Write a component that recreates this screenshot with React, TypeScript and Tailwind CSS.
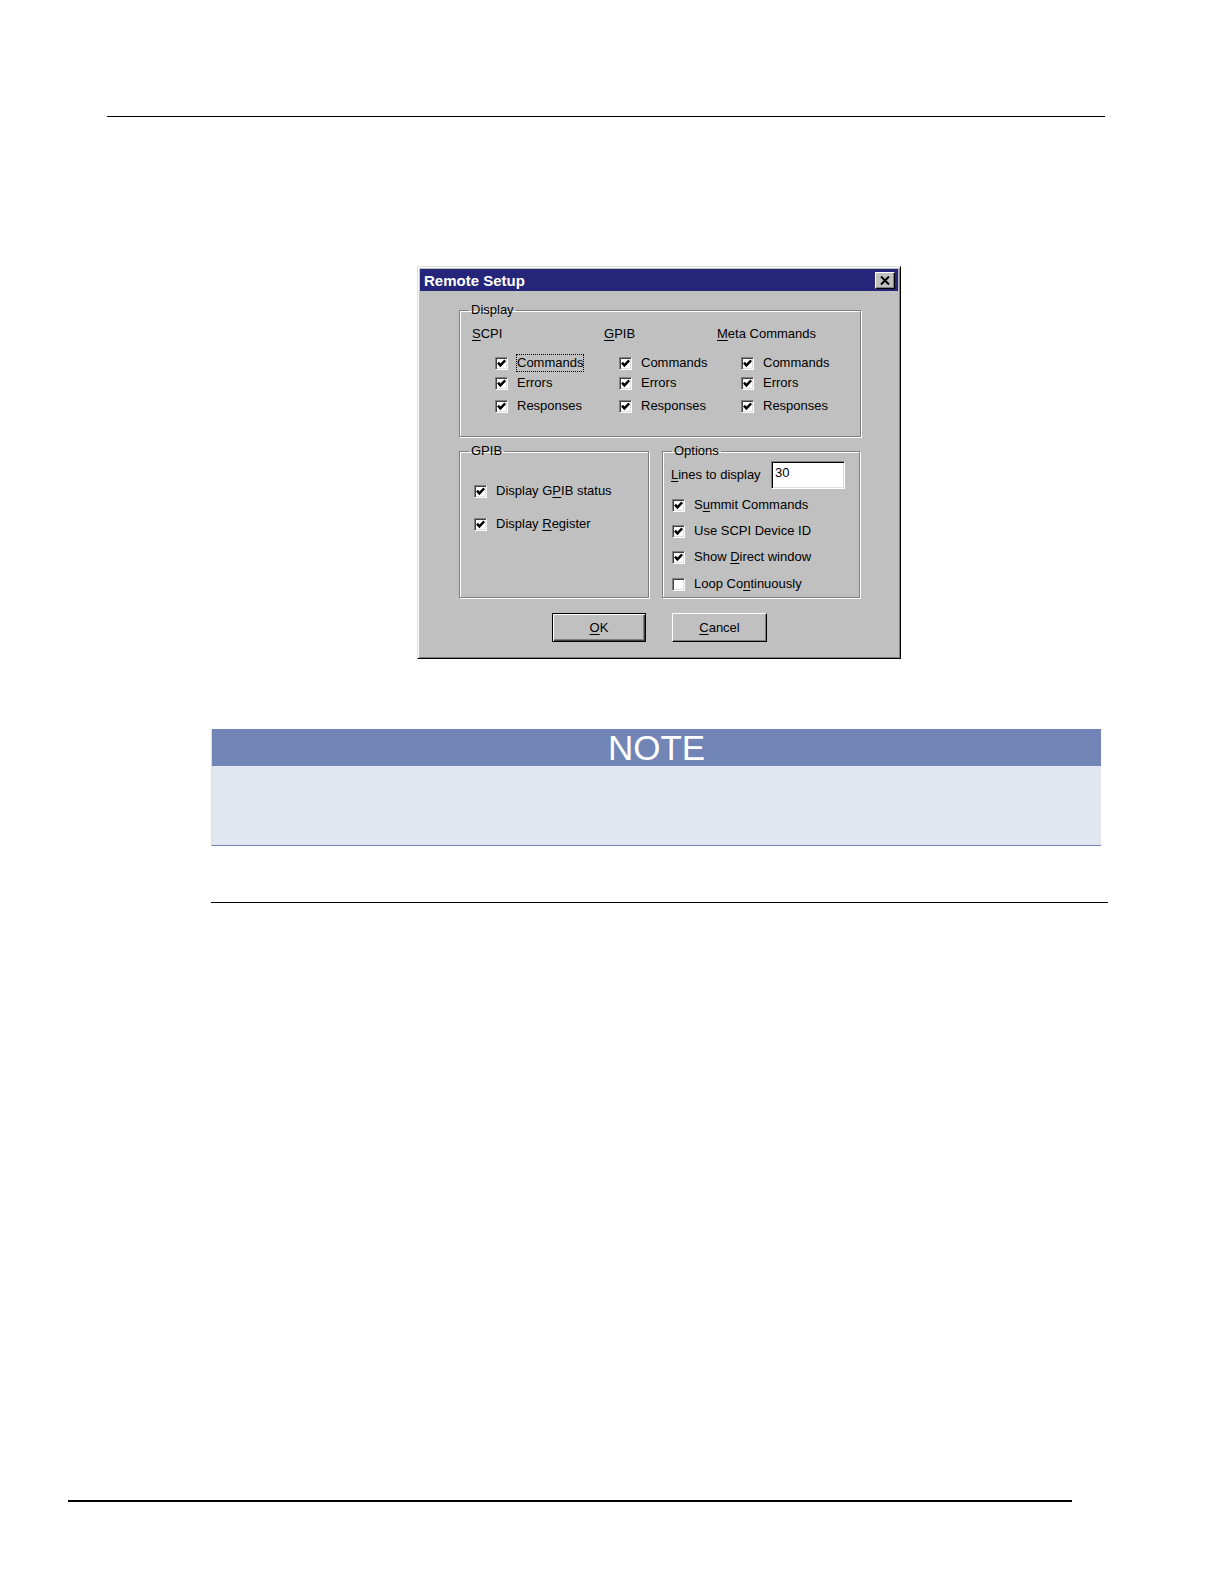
import React from 'react';

const font = { fontFamily: '"Liberation Sans", Arial, sans-serif' };

function Check({ checked = true }: { checked?: boolean }) {
  return (
    <span className="flex h-[13px] w-[13px] shrink-0 items-center justify-center border border-b-white border-l-[#808080] border-r-white border-t-[#808080] bg-white shadow-[inset_1px_1px_0_#404040,inset_-1px_-1px_0_#dfdfdf]">
      {checked && (
        <svg width="9" height="9" viewBox="0 0 9 9">
          <polyline points="1,3.6 3.4,6.4 8.2,1.4" fill="none" stroke="#000" strokeWidth="2.4" />
        </svg>
      )}
    </span>
  );
}

function Label({ text, ul }: { text: string; ul?: number }) {
  if (ul === undefined) return <>{text}</>;
  return (
    <>
      {text.slice(0, ul)}
      <span className="underline underline-offset-2">{text[ul]}</span>
      {text.slice(ul + 1)}
    </>
  );
}

function CheckRow({
  text,
  ul,
  checked = true,
  focus = false,
  className = '',
}: {
  text: string;
  ul?: number;
  checked?: boolean;
  focus?: boolean;
  className?: string;
}) {
  return (
    <div className={`flex h-[20px] items-center gap-[8px] ${className}`}>
      <Check checked={checked} />
      <span className={focus ? 'border border-dotted border-black leading-[16px]' : 'px-px leading-[16px]'}>
        <Label text={text} ul={ul} />
      </span>
    </div>
  );
}

function Column({ title, ul, indent, width }: { title: string; ul: number; indent: string; width: string }) {
  return (
    <div className={`flex flex-col ${width}`}>
      <div className="h-[16px] leading-[16px]">
        <Label text={title} ul={ul} />
      </div>
      <div className={`flex flex-col ${indent}`}>
        <CheckRow text="Commands" className="mt-[11px]" focus={title === 'SCPI'} />
        <CheckRow text="Errors" />
        <CheckRow text="Responses" className="mt-[3px]" />
      </div>
    </div>
  );
}

function Group({ title, className, children }: { title: string; className: string; children: React.ReactNode }) {
  return (
    <fieldset
      className={`m-0 border border-[#808080] p-0 shadow-[1px_1px_0_#fff,inset_1px_1px_0_#fff] ${className}`}
    >
      <legend className="ml-[9px] px-[2px] leading-[16px]">{title}</legend>
      {children}
    </fieldset>
  );
}

function Button({ text, ul, isDefault = false }: { text: string; ul: number; isDefault?: boolean }) {
  return (
    <div
      className={`flex h-[29px] items-center justify-center bg-[#c0c0c0] ${
        isDefault
          ? 'w-[94px] border border-black shadow-[inset_1px_1px_0_#fff,inset_-1px_-1px_0_#404040,inset_-2px_-2px_0_#808080]'
          : 'w-[95px] border border-b-black border-l-white border-r-black border-t-white shadow-[inset_-1px_-1px_0_#808080]'
      }`}
    >
      <Label text={text} ul={ul} />
    </div>
  );
}

function RemoteSetup() {
  return (
    <div
      className="ml-[417px] mt-[149px] flex h-[393px] w-[484px] flex-col border border-b-black border-l-[#dfdfdf] border-r-black border-t-[#dfdfdf] bg-[#c0c0c0] p-[2px] text-[13px] text-black shadow-[inset_1px_1px_0_#fff,inset_-1px_-1px_0_#808080]"
      style={font}
    >
      <div className="flex h-[22px] items-center justify-between bg-[#25257a] pl-[4px] pr-[3px]">
        <span className="text-[15px] font-bold leading-none text-white">Remote Setup</span>
        <span className="flex h-[17px] w-[20px] items-center justify-center border border-b-black border-l-white border-r-black border-t-white bg-[#c0c0c0] shadow-[inset_-1px_-1px_0_#808080]">
          <svg width="10" height="9" viewBox="0 0 10 9">
            <path d="M1 0.5 L9 8.5 M9 0.5 L1 8.5" stroke="#000" strokeWidth="2" />
          </svg>
        </span>
      </div>

      <div className="flex flex-col pl-[39px]">
        <Group title="Display" className="mt-[11px] h-[135px] w-[402px]">
          <div className="flex pl-[12px] pt-[8px]">
            <Column title="SCPI" ul={0} indent="pl-[23px]" width="w-[132px]" />
            <Column title="GPIB" ul={0} indent="pl-[15px]" width="w-[113px]" />
            <Column title="Meta Commands" ul={0} indent="pl-[24px]" width="w-[140px]" />
          </div>
        </Group>

        <div className="mt-[6px] flex gap-[13px]">
          <Group title="GPIB" className="h-[155px] w-[190px]">
            <div className="flex flex-col pl-[14px]">
              <CheckRow text="Display GPIB status" ul={9} className="mt-[22px]" />
              <CheckRow text="Display Register" ul={8} className="mt-[13px]" />
            </div>
          </Group>

          <Group title="Options" className="h-[155px] w-[198px]">
            <div className="flex flex-col pl-[8px]">
              <div className="mt-[2px] flex h-[28px] items-center">
                <span className="w-[100px]">
                  <Label text="Lines to display" ul={0} />
                </span>
                <div className="flex h-[28px] w-[74px] items-start border border-b-white border-l-[#808080] border-r-white border-t-[#808080] bg-white pl-[3px] pt-[3px] leading-[16px] shadow-[inset_1px_1px_0_#000,inset_-1px_-1px_0_#dfdfdf]">
                  30
                </div>
              </div>
              <div className="flex flex-col pl-[1px]">
                <CheckRow text="Summit Commands" ul={1} className="mt-[6px]" />
                <CheckRow text="Use SCPI Device ID" className="mt-[6px]" />
                <CheckRow text="Show Direct window" ul={5} className="mt-[6px]" />
                <CheckRow text="Loop Continuously" ul={7} checked={false} className="mt-[7px]" />
              </div>
            </div>
          </Group>
        </div>

        <div className="mt-[15px] flex gap-[26px] pl-[93px]">
          <Button text="OK" ul={0} isDefault />
          <Button text="Cancel" ul={0} />
        </div>
      </div>
    </div>
  );
}

function Note() {
  return (
    <div className="ml-[211px] mt-[70px] flex w-[890px] flex-col border-b border-l border-b-[#6f83ab] border-l-[#d6dcea]">
      <div className="flex h-[37px] items-center justify-center bg-[#7185b7]">
        <span className="text-[35px] leading-none text-white" style={font}>
          NOTE
        </span>
      </div>
      <div className="h-[79px] bg-[#e1e6f1]" />
    </div>
  );
}

export default function App() {
  return (
    <div className="flex h-[1584px] w-[1224px] flex-col bg-white">
      <div className="ml-[107px] mt-[116px] h-px w-[998px] bg-black" />
      <RemoteSetup />
      <Note />
      <div className="ml-[211px] mt-[56px] h-px w-[897px] bg-black" />
      <div className="mb-[82px] ml-[68px] mt-auto h-[2px] w-[1004px] bg-black" />
    </div>
  );
}
